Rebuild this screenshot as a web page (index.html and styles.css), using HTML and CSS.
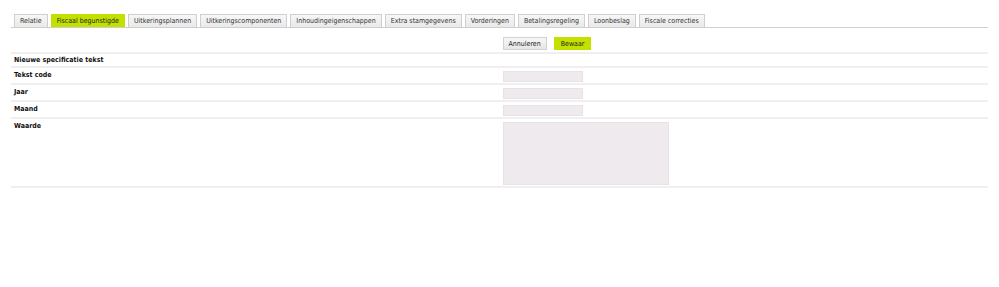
FILE: index.html
```html
<!DOCTYPE html>
<html lang="nl">
<head>
    <meta charset="UTF-8">
    <title>Fiscaal begunstigde</title>
    <link rel="stylesheet" href="styles.css">
</head>
<body>
    <div class="page">
        <ul class="tabs">
            <li class="tab">Relatie</li>
            <li class="tab active">Fiscaal begunstigde</li>
            <li class="tab">Uitkeringsplannen</li>
            <li class="tab">Uitkeringscomponenten</li>
            <li class="tab">Inhoudingeigenschappen</li>
            <li class="tab">Extra stamgegevens</li>
            <li class="tab">Vorderingen</li>
            <li class="tab">Betalingsregeling</li>
            <li class="tab">Loonbeslag</li>
            <li class="tab">Fiscale correcties</li>
        </ul>

        <div class="form">
            <div class="row actions">
                <div class="label"></div>
                <div class="buttons">
                    <button class="btn">Annuleren</button>
                    <button class="btn primary">Bewaar</button>
                </div>
            </div>
            <div class="row">
                <div class="label heading">Nieuwe specificatie tekst</div>
                <div class="field"></div>
            </div>
            <div class="row">
                <div class="label">Tekst code</div>
                <div class="field"><input class="input" type="text"></div>
            </div>
            <div class="row">
                <div class="label">Jaar</div>
                <div class="field"><input class="input" type="text"></div>
            </div>
            <div class="row">
                <div class="label">Maand</div>
                <div class="field"><input class="input" type="text"></div>
            </div>
            <div class="row">
                <div class="label">Waarde</div>
                <div class="field"><textarea class="textarea"></textarea></div>
            </div>
        </div>
    </div>
</body>
</html>
```

FILE: styles.css
```css
* {
    box-sizing: border-box;
}
body {
    margin: 0;
    background: #fff;
    color: #222;
    font-family: "DejaVu Sans Condensed", "DejaVu Sans", sans-serif;
    font-size: 7px;
}
.page {
    padding: 14px 11px 0 11px;
}

/* tabbladen */
.tabs {
    list-style: none;
    margin: 0;
    padding: 0 0 0 3px;
    display: flex;
    gap: 3px;
    border-bottom: 1px solid #cfcfcf;
}
.tab {
    height: 13px;
    line-height: 12px;
    padding: 0 5px;
    border: 1px solid #cfcfcf;
    border-bottom: none;
    background: linear-gradient(#f7f7f7, #e9e9e9);
    color: #333;
}
.tab.active {
    background: #c3e000;
    border-color: #c3e000;
    color: #222;
}

/* formulier */
.form {
    margin-top: 8px;
}
.row {
    display: grid;
    grid-template-columns: 1fr 1fr;
    border-bottom: 2px solid #efefef;
}
.label {
    padding: 3px;
    line-height: 9px;
    font-weight: bold;
    color: #111;
}
.label.heading {
    padding: 2px 3px 1px 3px;
}
.field {
    padding: 3px 3px 1px 3px;
}
.buttons {
    display: flex;
    gap: 7px;
    padding: 1px 3px 2px 3px;
}
.btn {
    height: 13px;
    padding: 0 5px;
    font-family: inherit;
    font-size: 7px;
    color: #222;
    border: 1px solid #d2d2d2;
    background: linear-gradient(#f7f7f7, #e6e6e6);
}
.btn.primary {
    background: #c3e000;
    border-color: #c3e000;
    padding: 0 6px;
}
.input {
    display: block;
    width: 80px;
    height: 11px;
    border: 1px solid #e6e2e6;
    background: #eeeaed;
    padding: 0;
}
.textarea {
    display: block;
    width: 166px;
    height: 63px;
    border: 1px solid #e6e2e6;
    background: #eeeaed;
    resize: none;
    padding: 0;
}
```
